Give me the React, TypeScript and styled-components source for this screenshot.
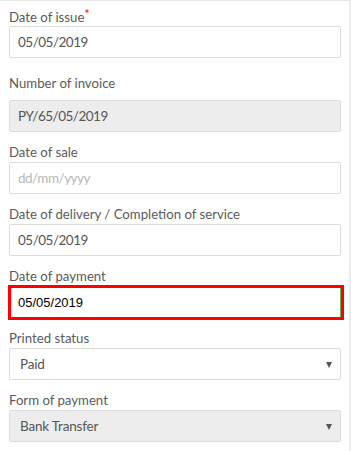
import React from "react";
import styled, { createGlobalStyle } from "styled-components";

const Global = createGlobalStyle`
  html, body { margin: 0; padding: 0; background: #fff; }
  body { font-family: Lato, "Open Sans", sans-serif; }
`;

const Panel = styled.div`
  box-sizing: border-box;
  width: 351px;
  height: 451px;
  border-top: 1px solid #e8e8e8;
  border-right: 2px solid #ececec;
  padding: 7px 8px 0 9px;
  display: flex;
  flex-direction: column;
  overflow: hidden;
`;

const Group = styled.div<{ $mb?: number }>`
  display: flex;
  flex-direction: column;
  margin-bottom: ${(p) => (p.$mb ?? 11)}px;
`;

const Label = styled.div<{ $mb?: number }>`
  font-size: 13.2px;
  line-height: 18px;
  color: #5b5b5b;
  margin-bottom: ${(p) => (p.$mb ?? 1)}px;
`;

const Req = styled.span`
  color: #e8112d;
  font-size: 13px;
  vertical-align: top;
  line-height: 12px;
`;

const Field = styled.div<{ $disabled?: boolean; $placeholder?: boolean }>`
  box-sizing: border-box;
  height: 32px;
  width: 332px;
  border: 1px solid #dcdcdc;
  border-radius: 2px;
  background: ${(p) => (p.$disabled ? "#ededed" : "#fff")};
  color: ${(p) => (p.$placeholder ? "#b8b8b8" : "#565656")};
  font-size: 13.5px;
  letter-spacing: -0.5px;
  display: flex;
  align-items: center;
  padding-left: 8px;
`;

const SelectBox = styled(Field)`
  padding-left: 10px;
  padding-right: 8px;
  letter-spacing: -0.2px;
  justify-content: space-between;
`;

const Arrow = styled.span`
  width: 0;
  height: 0;
  border-left: 3.5px solid transparent;
  border-right: 3.5px solid transparent;
  border-top: 6px solid #555;
  margin-top: 1px;
`;

const Highlight = styled.div`
  box-sizing: border-box;
  height: 35px;
  width: 336px;
  margin-left: -1px;
  border: 3px solid #ff0000;
  background: #fff;
  display: flex;
  align-items: center;
  padding-left: 7px;
  font-family: "Liberation Sans", Arial, sans-serif;
  font-size: 13px;
  color: #000;
  box-shadow: inset -1px 0 0 #7cb342;
`;

export default function App() {
  return (
    <>
      <Global />
      <Panel>
        <Group $mb={16}>
          <Label $mb={0}>
            Date of issue<Req>*</Req>
          </Label>
          <Field>05/05/2019</Field>
        </Group>
        <Group>
          <Label $mb={8}>Number of invoice</Label>
          <Field $disabled>PY/65/05/2019</Field>
        </Group>
        <Group>
          <Label>Date of sale</Label>
          <Field $placeholder>dd/mm/yyyy</Field>
        </Group>
        <Group>
          <Label>Date of delivery / Completion of service</Label>
          <Field>05/05/2019</Field>
        </Group>
        <Group $mb={9}>
          <Label $mb={0}>Date of payment</Label>
          <Highlight>05/05/2019</Highlight>
        </Group>
        <Group>
          <Label>Printed status</Label>
          <SelectBox>
            Paid
            <Arrow />
          </SelectBox>
        </Group>
        <Group>
          <Label>Form of payment</Label>
          <SelectBox $disabled>
            Bank Transfer
            <Arrow />
          </SelectBox>
        </Group>
      </Panel>
    </>
  );
}
